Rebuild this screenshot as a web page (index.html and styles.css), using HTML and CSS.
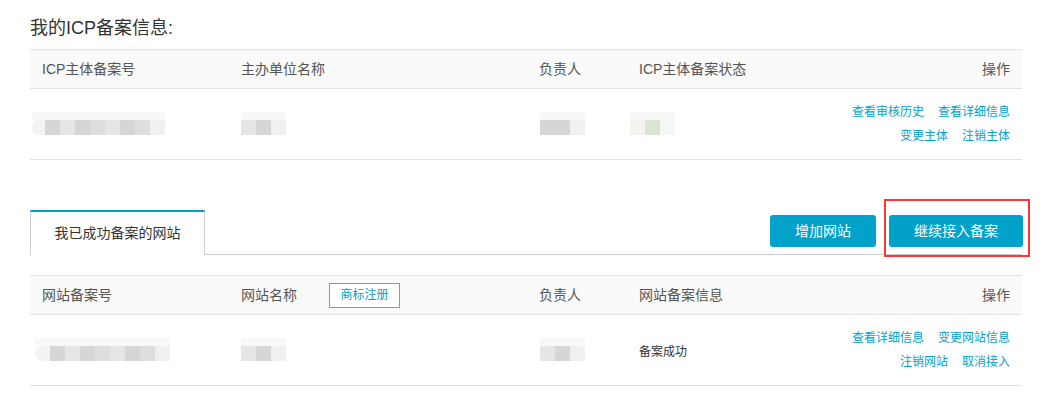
FILE: index.html
```html
<!DOCTYPE html>
<html lang="zh-CN">
<head>
<meta charset="utf-8">
<title>ICP备案信息</title>
<link rel="stylesheet" href="styles.css">
</head>
<body>
<div class="page">
  <h2 class="title">我的ICP备案信息:</h2>

  <div class="table">
    <div class="row head">
      <div class="cell">ICP主体备案号</div>
      <div class="cell">主办单位名称</div>
      <div class="cell">负责人</div>
      <div class="cell">ICP主体备案状态</div>
      <div class="cell ops">操作</div>
    </div>
    <div class="row body">
      <div class="cell"><div class="mosaic m1"><span class="c a"></span><span class="c d"></span><span class="c b"></span><span class="c d"></span><span class="c c2"></span><span class="c b"></span><span class="c d"></span><span class="c c2"></span><span class="c e"></span></div></div>
      <div class="cell"><div class="mosaic m2"><span class="c b"></span><span class="c d"></span><span class="c e"></span></div></div>
      <div class="cell"><div class="mosaic m3"><span class="c d"></span><span class="c d"></span><span class="c e"></span></div></div>
      <div class="cell"><div class="mosaic m4"><span class="c g1"></span><span class="c g2"></span><span class="c g3"></span></div></div>
      <div class="cell ops">
        <div class="links"><a class="link">查看审核历史</a><a class="link">查看详细信息</a></div>
        <div class="links"><a class="link">变更主体</a><a class="link">注销主体</a></div>
      </div>
    </div>
  </div>

  <div class="tabbar">
    <div class="tab">我已成功备案的网站</div>
    <div class="tab-actions">
      <button class="btn">增加网站</button>
      <button class="btn btn-hl">继续接入备案</button>
    </div>
  </div>

  <div class="table table2">
    <div class="row head">
      <div class="cell">网站备案号</div>
      <div class="cell">网站名称<span class="tm">商标注册</span></div>
      <div class="cell">负责人</div>
      <div class="cell">网站备案信息</div>
      <div class="cell ops">操作</div>
    </div>
    <div class="row body">
      <div class="cell"><div class="mosaic m5"><span class="c a"></span><span class="c d"></span><span class="c b"></span><span class="c d"></span><span class="c c2"></span><span class="c b"></span><span class="c d"></span><span class="c c2"></span><span class="c e"></span></div></div>
      <div class="cell"><div class="mosaic m2"><span class="c b"></span><span class="c d"></span><span class="c e"></span></div></div>
      <div class="cell"><div class="mosaic m3"><span class="c b"></span><span class="c d"></span><span class="c e"></span></div></div>
      <div class="cell status">备案成功</div>
      <div class="cell ops">
        <div class="links"><a class="link">查看详细信息</a><a class="link">变更网站信息</a></div>
        <div class="links"><a class="link">注销网站</a><a class="link">取消接入</a></div>
      </div>
    </div>
  </div>
</div>
</body>
</html>
```

FILE: styles.css
```css
* { box-sizing: border-box; }
html, body { margin: 0; padding: 0; background: #fff; }
body {
  font-family: "Liberation Sans", "Noto Sans CJK SC", sans-serif;
  color: #333;
  width: 1042px;
  height: 394px;
  overflow: hidden;
}
.page {
  position: relative;
  padding: 16px 20px 0 30px;
}
.title {
  margin: 0 0 9px 0;
  font-size: 18px;
  font-weight: normal;
  line-height: 24px;
  color: #333;
}
.table { width: 992px; }
.row {
  display: grid;
  grid-template-columns: 199px 298px 100px 1fr auto;
  align-items: center;
  padding: 0 12px;
  border-bottom: 1px solid #e3e3e3;
}
.row.head {
  height: 40px;
  border-top: 1px solid #e3e3e3;
  background: #fafafa;
  font-size: 14px;
  color: #555;
  line-height: 20px;
}
.row.body {
  height: 71px;
  font-size: 12px;
}
.cell { display: flex; align-items: center; }
.cell.ops {
  flex-direction: column;
  align-items: flex-end;
  justify-self: end;
}
.links {
  display: flex;
  gap: 14px;
  line-height: 24px;
  font-size: 12px;
}
.link { color: #00a2ca; text-decoration: none; cursor: pointer; }
.status { color: #333; font-size: 12px; }

.tm {
  display: inline-block;
  margin-left: 32px;
  width: 71px;
  height: 25px;
  line-height: 23px;
  text-align: center;
  border: 1px solid #3ab8de;
  color: #00a2ca;
  font-size: 12px;
  background: #fff;
}

.mosaic {
  display: flex;
  height: 15px;
  margin-top: 6px;
  filter: blur(0.6px);
  position: relative;
}
.mosaic::before {
  content: "";
  position: absolute;
  left: 0; right: 0;
  top: -8px;
  height: 8px;
  background: #f8f8f8;
}
.mosaic .c { display: block; width: 15px; height: 15px; }
.c.a { background: #f3f3f3; border-radius: 7px 0 0 7px; }
.c.b { background: #e6e6e6; }
.c.c2 { background: #dedede; }
.c.d { background: #d6d6d6; }
.c.e { background: #f0f0f0; }
.c.g1 { background: #f2f5ef; }
.c.g2 { background: #d9e4d2; }
.c.g3 { background: #f5f7f4; }
.m1 { margin-left: -10px; }
.m1 .c.a { width: 13px; }
.m3 { margin-left: 1px; }
.m4 { margin-left: -9px; }
.m5 { margin-left: -7px; }

.tabbar {
  margin-top: 50px;
  width: 992px;
  height: 45px;
  display: flex;
  align-items: center;
  justify-content: space-between;
  border-bottom: 1px solid #ccc;
}
.tab {
  align-self: flex-end;
  height: 45px;
  margin-bottom: -1px;
  padding: 0;
  width: 175px;
  white-space: nowrap;
  border-top: 2px solid #00a2ca;
  border-left: 1px solid #ccc;
  border-right: 1px solid #ccc;
  background: #fff;
  font-size: 14px;
  line-height: 42px;
  text-align: center;
  color: #333;
}
.tab-actions {
  display: flex;
  gap: 13px;
  margin-right: -1px;
  margin-bottom: 2px;
}
.btn {
  height: 32px;
  padding: 0 25px;
  border: none;
  border-radius: 3px;
  background: #00a2ca;
  color: #fff;
  font-family: inherit;
  font-size: 14px;
  line-height: 32px;
  cursor: pointer;
}
.btn-hl { position: relative; }
.btn-hl::after {
  content: "";
  position: absolute;
  left: -5px;
  right: -7px;
  top: -16px;
  bottom: -10px;
  border: 2px solid #f23a3a;
  pointer-events: none;
}
.table2 { margin-top: 20px; }
```
